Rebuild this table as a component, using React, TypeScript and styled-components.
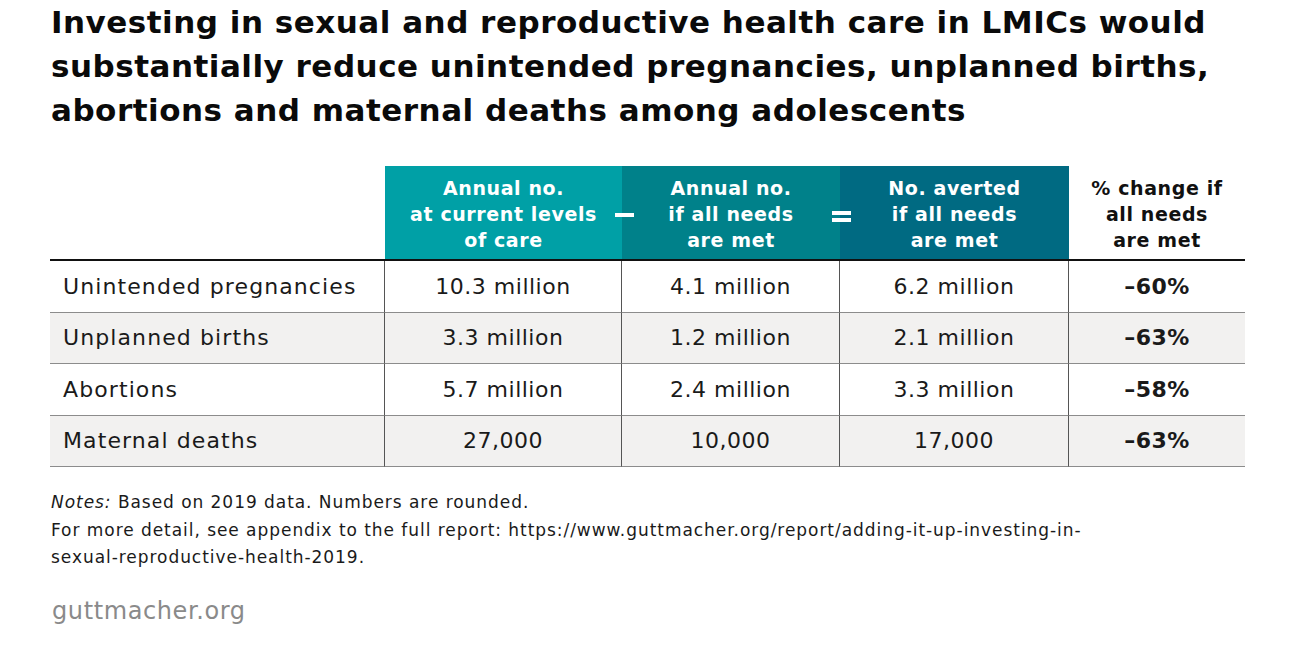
import React from "react";
import styled, { createGlobalStyle } from "styled-components";

const Global = createGlobalStyle`
  html, body { margin: 0; padding: 0; background: #fff; }
  body { font-family: "DejaVu Sans", "Noto Sans", sans-serif; color: #111; }
`;

const Page = styled.div`
  width: 1300px;
  height: 669px;
  box-sizing: border-box;
  padding: 0 55px 0 50px;
  overflow: hidden;
`;

const Title = styled.h1`
  margin: 0;
  padding: 0 0 0 1px;
  font-weight: 700;
  font-size: 31px;
  line-height: 44px;
  letter-spacing: 0.5px;
  white-space: nowrap;
  color: #0a0a0a;
`;

const Table = styled.div`
  margin-top: 34px;
  width: 1195px;
  display: grid;
  grid-template-columns: 335px 237px 218px 229px 176px;
  position: relative;
`;

const HeadCell = styled.div<{ $bg?: string; $dark?: boolean }>`
  height: 95px;
  background: ${(p) => p.$bg || "transparent"};
  color: ${(p) => (p.$dark ? "#111" : "#fff")};
  display: flex;
  align-items: center;
  justify-content: center;
  text-align: center;
  font-weight: 700;
  font-size: 19px;
  line-height: 26px;
  letter-spacing: 0.6px;
  padding-top: 2px;
  box-sizing: border-box;
  border-bottom: 2px solid #111;
  position: relative;
`;

const Operator = styled.span<{ $top: number; $right: number }>`
  position: absolute;
  right: ${(p) => p.$right}px;
  top: ${(p) => p.$top}px;
  width: 19px;
  display: flex;
  flex-direction: column;
  gap: 3px;
  z-index: 2;
`;

const Bar = styled.span`
  display: block;
  height: 4px;
  background: #fff;
`;

const Cell = styled.div<{ $alt: boolean; $first?: boolean; $last?: boolean; $bold?: boolean }>`
  height: 51.5px;
  box-sizing: border-box;
  background: ${(p) => (p.$alt ? "#f2f1f0" : "#fff")};
  border-bottom: 1px solid #8c8c8c;
  border-right: ${(p) => (p.$last ? "none" : "1px solid #555")};
  display: flex;
  align-items: center;
  justify-content: ${(p) => (p.$first ? "flex-start" : "center")};
  padding-left: ${(p) => (p.$first ? "13px" : "0")};
  font-size: 22px;
  letter-spacing: ${(p) => (p.$first ? "1.1px" : "0.5px")};
  font-weight: ${(p) => (p.$bold ? 700 : 400)};
  color: #1a1a1a;
`;

const Notes = styled.div`
  margin-top: 22px;
  padding-left: 1px;
  font-size: 17px;
  line-height: 27.5px;
  letter-spacing: 0.95px;
  white-space: nowrap;
  color: #1a1a1a;
`;

const Line = styled.div``;

const Brand = styled.div`
  margin-top: 25px;
  padding-left: 2px;
  font-size: 24px;
  letter-spacing: 0.6px;
  color: #8a8a8a;
`;

const rows = [
  ["Unintended pregnancies", "10.3 million", "4.1 million", "6.2 million", "–60%"],
  ["Unplanned births", "3.3 million", "1.2 million", "2.1 million", "–63%"],
  ["Abortions", "5.7 million", "2.4 million", "3.3 million", "–58%"],
  ["Maternal deaths", "27,000", "10,000", "17,000", "–63%"],
];

export default function App() {
  return (
    <>
      <Global />
      <Page>
        <Title>
          Investing in sexual and reproductive health care in LMICs would
          <br />
          substantially reduce unintended pregnancies, unplanned births,
          <br />
          abortions and maternal deaths among adolescents
        </Title>
        <Table>
          <HeadCell />
          <HeadCell $bg="#00a0a6">
            Annual no.
            <br />
            at current levels
            <br />
            of care
            <Operator $top={47} $right={-12}>
              <Bar />
            </Operator>
          </HeadCell>
          <HeadCell $bg="#00818a">
            Annual no.
            <br />
            if all needs
            <br />
            are met
            <Operator $top={45} $right={-11}>
              <Bar />
              <Bar />
            </Operator>
          </HeadCell>
          <HeadCell $bg="#006a82">
            No. averted
            <br />
            if all needs
            <br />
            are met
          </HeadCell>
          <HeadCell $dark>
            % change if
            <br />
            all needs
            <br />
            are met
          </HeadCell>
          {rows.map((r, i) =>
            r.map((c, j) => (
              <Cell
                key={`${i}-${j}`}
                $alt={i % 2 === 1}
                $first={j === 0}
                $last={j === 4}
                $bold={j === 4}
              >
                {c}
              </Cell>
            ))
          )}
        </Table>
        <Notes>
          <Line>
            <i>Notes:</i> Based on 2019 data. Numbers are rounded.
          </Line>
          <Line>
            For more detail, see appendix to the full report: https://www.guttmacher.org/report/adding-it-up-investing-in-
          </Line>
          <Line>sexual-reproductive-health-2019.</Line>
        </Notes>
        <Brand>guttmacher.org</Brand>
      </Page>
    </>
  );
}
